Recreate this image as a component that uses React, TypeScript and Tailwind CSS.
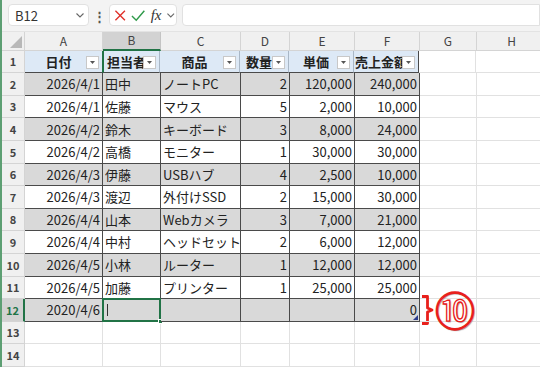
const cols = [
  { key: 'A', w: 'w-[78px]' },
  { key: 'B', w: 'w-[58px]' },
  { key: 'C', w: 'w-[80px]' },
  { key: 'D', w: 'w-[49px]' },
  { key: 'E', w: 'w-[65px]' },
  { key: 'F', w: 'w-[65px]' },
  { key: 'G', w: 'w-[57px]' },
  { key: 'H', w: 'w-[70px]' },
]

const headers = ['日付', '担当者', '商品', '数量', '単価', '売上金額']

const rows = [
  ['2026/4/1', '田中', 'ノートPC', '2', '120,000', '240,000'],
  ['2026/4/1', '佐藤', 'マウス', '5', '2,000', '10,000'],
  ['2026/4/2', '鈴木', 'キーボード', '3', '8,000', '24,000'],
  ['2026/4/2', '高橋', 'モニター', '1', '30,000', '30,000'],
  ['2026/4/3', '伊藤', 'USBハブ', '4', '2,500', '10,000'],
  ['2026/4/3', '渡辺', '外付けSSD', '2', '15,000', '30,000'],
  ['2026/4/4', '山本', 'Webカメラ', '3', '7,000', '21,000'],
  ['2026/4/4', '中村', 'ヘッドセット', '2', '6,000', '12,000'],
  ['2026/4/5', '小林', 'ルーター', '1', '12,000', '12,000'],
  ['2026/4/5', '加藤', 'プリンター', '1', '25,000', '25,000'],
  ['2020/4/6', '', '', '', '', '0'],
]

const rightAligned = [true, false, false, true, true, true]

function Chevron() {
  return (
    <svg width="10" height="10" viewBox="0 0 10 10" className="text-[#666]">
      <path d="M1.5 3.5 L5 7 L8.5 3.5" fill="none" stroke="currentColor" strokeWidth="1.1" />
    </svg>
  )
}

function FilterButton() {
  return (
    <span className="absolute right-[3px] bottom-[3px] w-[13px] h-[13px] bg-white border border-[#c8c8c8] flex items-center justify-center">
      <svg width="5" height="3" viewBox="0 0 5 3">
        <path d="M0 0 L5 0 L2.5 3 Z" fill="#555" />
      </svg>
    </span>
  )
}

function FormulaBar() {
  return (
    <div className="h-[32px] flex items-center gap-[4px] pl-[6px] bg-[#f3f3f3] border-b border-[#e3e3e3]">
      <div className="w-[81px] h-[22px] bg-white border border-[#e1e1e1] rounded-[4px] flex items-center justify-between pl-[6px] pr-[3px]">
        <span className="text-[13px] text-[#333]">B12</span>
        <Chevron />
      </div>
      <span className="text-[#555] text-[13px] font-bold w-[12px] text-center leading-none">⋮</span>
      <div className="w-[68px] h-[22px] bg-white border border-[#e1e1e1] rounded-[4px] flex items-center gap-[5px] pl-[4px]">
        <svg width="13" height="13" viewBox="0 0 13 13">
          <path d="M1.5 1.5 L11.5 11.5 M11.5 1.5 L1.5 11.5" stroke="#e0302a" strokeWidth="1.4" />
        </svg>
        <svg width="15" height="13" viewBox="0 0 15 13">
          <path d="M1 7 L5.5 11.5 L14 1.5" fill="none" stroke="#2f9a4a" strokeWidth="1.5" />
        </svg>
        <span className="text-[15px] italic text-[#333] font-['Liberation_Serif',serif] leading-none">fx</span>
        <Chevron />
      </div>
      <div className="flex-1 h-[22px] bg-white border border-[#e1e1e1] rounded-l-[4px] ml-[1px]" />
    </div>
  )
}

export default function App() {
  return (
    <div className="w-[540px] h-[367px] overflow-hidden bg-white flex font-['Noto_Sans_CJK_JP',sans-serif] text-[#222]">
      <div className="w-[2px] shrink-0 bg-[#5d9f73]" />
      <div className="flex-1 flex flex-col min-w-0">
        <FormulaBar />

        {/* column letters */}
        <div className="flex h-[19px] shrink-0 bg-[#f0f0f0] text-[12px] text-[#444]">
          <div className="w-[23px] shrink-0 relative border-r border-b border-[#d4d4d4]">
            <svg width="12" height="12" viewBox="0 0 12 12" className="absolute right-[2px] bottom-[2px]">
              <path d="M12 0 L12 12 L0 12 Z" fill="#b8b8b8" />
            </svg>
          </div>
          {cols.map(c => (
            <div
              key={c.key}
              className={`${c.w} shrink-0 flex items-center justify-center border-r ${c.key === 'B' ? 'bg-[#d2d2d2] border-b-2 border-b-[#217346] border-r-[#c4c4c4]' : 'border-b border-[#d4d4d4]'}`}
            >
              {c.key}
            </div>
          ))}
        </div>

        {/* header row */}
        <div className="flex h-[22.6px] shrink-0">
          <div className="w-[23px] shrink-0 bg-[#f0f0f0] border-r border-b border-[#d4d4d4] text-[11px] font-bold text-[#444] flex items-center justify-center">1</div>
          {headers.map((h, i) => (
            <div
              key={h}
              className={`${cols[i].w} shrink-0 relative bg-[#dde9f6] border-b border-b-[#4a4a4a] border-r ${i === 5 ? 'border-r-[#4a4a4a]' : 'border-r-[#a9b7c6]'} ${i === 1 ? 'border-l-2 border-l-[#217346] -ml-[1px]' : ''} text-[13px] font-bold flex items-center justify-center pr-[10px]`}
            >
              <span className="whitespace-nowrap overflow-hidden">{h}</span>
              <FilterButton />
            </div>
          ))}
          <div className="w-[57px] shrink-0 border-r border-b border-[#e1e1e1]" />
          <div className="w-[70px] shrink-0 border-r border-b border-[#e1e1e1]" />
        </div>

        {/* data rows */}
        {rows.map((r, ri) => {
          const n = ri + 2
          const gray = ri % 2 === 0
          const last = n === 12
          return (
            <div key={n} className="flex h-[22.6px] shrink-0">
              <div
                className={`w-[23px] shrink-0 border-b border-[#d4d4d4] text-[11px] font-bold flex items-center justify-center ${last ? 'bg-[#d2d2d2] text-[#217346] border-r-2 border-r-[#217346]' : 'bg-[#f0f0f0] text-[#444] border-r'}`}
              >
                {n}
              </div>
              {r.map((v, ci) => {
                const selected = last && ci === 1
                return (
                  <div
                    key={ci}
                    className={`${cols[ci].w} shrink-0 relative border-r border-b border-[#4a4a4a] ${gray ? 'bg-[#d9d9d9]' : 'bg-white'} text-[13px] flex items-center px-[2px] ${rightAligned[ci] ? 'justify-end' : 'justify-start'}`}
                  >
                    <span className="whitespace-nowrap">{v}</span>
                    {selected && (
                      <>
                        <span className="absolute -left-[1px] -top-[1px] -right-[1px] -bottom-[1px] border-2 border-[#217346]" />
                        <span className="absolute left-[4px] top-[5px] w-px h-[12px] bg-[#333]" />
                        <span className="absolute -right-[3px] -bottom-[3px] w-[5px] h-[5px] bg-[#217346] border border-white" />
                      </>
                    )}
                    {last && ci === 5 && (
                      <svg width="5" height="5" viewBox="0 0 5 5" className="absolute right-[1px] bottom-[1px]">
                        <path d="M5 0 L5 5 L0 5 Z" fill="#2b3a8c" />
                      </svg>
                    )}
                    {last && ci === 5 && (
                      <svg width="16" height="30" viewBox="0 0 16 30" className="absolute -right-[17px] -top-[4px] overflow-visible">
                        <path d="M2 1.5 L7.5 1.5 L7.5 13 L12 15 L7.5 17 L7.5 28.5 L2 28.5" fill="none" stroke="#e8201c" strokeWidth="2.8" strokeLinejoin="round" />
                      </svg>
                    )}
                  </div>
                )
              })}
              <div className="w-[57px] shrink-0 border-r border-b border-[#e1e1e1] relative">
                {last && (
                  <span className="absolute left-[15px] -top-[10px] text-[40px] leading-none text-white font-normal [-webkit-text-stroke:1.3px_#e8201c] [text-shadow:1px_1px_1px_#888]">
                    ⑩
                  </span>
                )}
              </div>
              <div className="w-[70px] shrink-0 border-r border-b border-[#e1e1e1]" />
            </div>
          )
        })}

        {/* empty rows 13,14 */}
        {[13, 14].map(n => (
          <div key={n} className="flex h-[22.6px] shrink-0">
            <div className="w-[23px] shrink-0 bg-[#f0f0f0] border-r border-b border-[#d4d4d4] text-[11px] font-bold text-[#444] flex items-center justify-center">{n}</div>
            {cols.map(c => (
              <div key={c.key} className={`${c.w} shrink-0 border-r border-b border-[#e1e1e1]`} />
            ))}
          </div>
        ))}
      </div>
    </div>
  )
}
